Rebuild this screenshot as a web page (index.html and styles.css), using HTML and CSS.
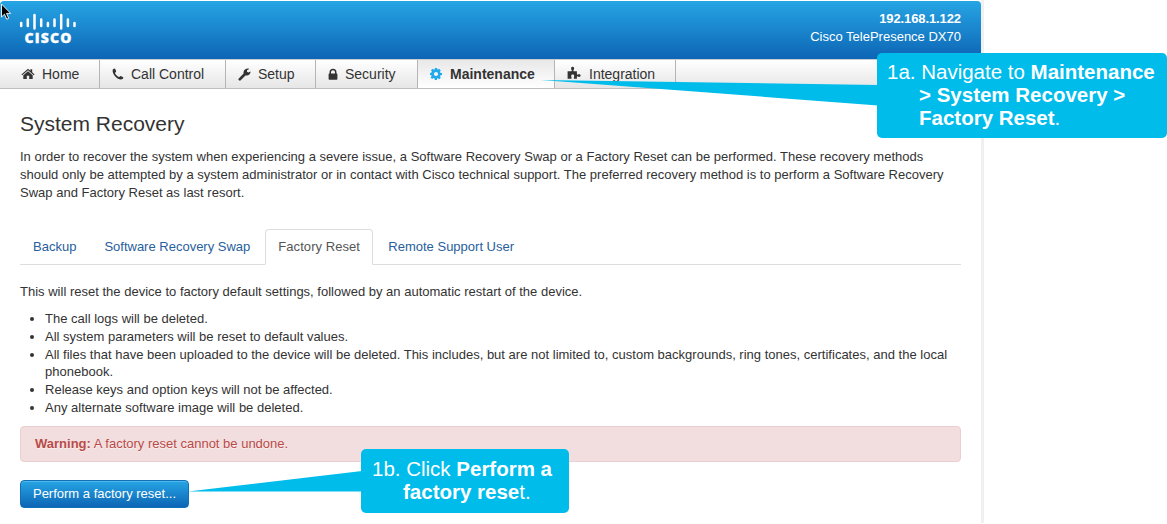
FILE: index.html
```html
<!DOCTYPE html>
<html lang="en">
<head>
<meta charset="utf-8">
<title>System Recovery</title>
<link rel="stylesheet" href="styles.css">
</head>
<body>
<div class="panel">
  <header class="header">
    <svg class="logo" width="60" height="34" viewBox="0 0 60 34" role="img" aria-label="Cisco">
      <g stroke="#fff" stroke-width="2.5" stroke-linecap="round">
        <path d="M2.200 11v3M8.800 7.500v6.500M15.500 3v13.500M22.200 7.500v6.500M28.900 11v3M35.500 7.500v6.500M42.200 3v13.500M48.900 7.500v6.500M55.500 11v3"/>
      </g>
      <text class="logo-text" x="5.500" y="31.300" textLength="47" lengthAdjust="spacing">CISCO</text>
    </svg>
    <div class="device"><b>192.168.1.122</b><span>Cisco TelePresence DX70</span></div>
  </header>
  <nav class="nav">
    <a class="nav-item home"><svg width="14" height="12" viewBox="0 0 14 12"><path d="M7 .7 9.400 2.800V1.200h1.800v3.100l2.400 2.100-.8.9L7 2.300 1.200 7.300l-.8-.9z"/><path d="M7 3.300 11.700 7.300V11H8.200V7.800H5.800V11H2.300V7.300z"/></svg>Home</a>
    <a class="nav-item call"><svg width="12" height="12" viewBox="0 0 12 12"><path d="M.6 2.200C.7 1.300 1.800.7 2.700.6c.5 0 1.300 2.200 1.400 2.800.1.6-1.100 1.100-1.100 1.700 0 .9 3 3.900 3.900 3.900.6 0 1.100-1.200 1.700-1.100.6.100 2.800 1.100 2.800 1.600-.1 1.200-1.200 2-2.500 2C5.300 11.500.3 6.300.6 2.200z"/></svg>Call Control</a>
    <a class="nav-item setup"><svg width="13" height="13" viewBox="0 0 13 13"><path d="M.8 10.400 5.600 5.600C5.100 3 7 .6 9.600.5c.6 0 1.200.1 1.600.4L9 2.200v1.600l1.400.8 2.200-1.200C12.700 5.900 10.100 8 7.500 7.500L2.700 12.300c-.5.5-1.200.4-1.700 0-.7-.6-.7-1.400-.2-1.900z"/></svg>Setup</a>
    <a class="nav-item security"><svg width="10" height="13" viewBox="0 0 10 13"><path fill-rule="evenodd" d="M1.500 5.500V4.300a3.500 3.500 0 0 1 7 0v1.200h.2c.4 0 .7.3.7.7v4.800c0 .4-.3.700-.7.700H1.300c-.4 0-.7-.3-.7-.7V6.200c0-.4.3-.7.700-.7zM3 5.500h4V4.300a2 2 0 0 0-4 0z"/></svg>Security</a>
    <a class="nav-item maintenance active"><svg width="12" height="12" viewBox="0 0 12 12"><path fill-rule="evenodd" d="M4.900 0h2.200l.4 1.700 1.500-.9 1.800 1.700-1 1.500.5.700 1.700.300v2l-1.700.400-.3.900.8 1.400-1.600 1.500-1.500-.9-.7.300L6.900 12H4.800l-.3-1.500-1-.4-1.400.9L.6 9.400l1-1.500-.3-.7L0 6.900v-2l1.500-.3.400-.9-.9-1.500L2.500.8l1.400.9.700-.300zM6 3.900a2.100 2.100 0 1 0 0 4.200 2.100 2.100 0 0 0 0-4.200z"/></svg>Maintenance</a>
    <a class="nav-item integration"><svg width="14" height="14" viewBox="0 0 14 14"><path d="M.6 5.300h3.700c.7 0 .7-.6.3-1.200C3.700 2.700 3.900.8 5.600.8s1.900 1.900 1 3.300c-.4.600-.4 1.200.3 1.200h3v2.800c0 .7.500.8 1 .5 1.200-.8 2.700-.3 2.700 1s-1.500 1.700-2.700.9c-.5-.3-1-.2-1 .5v1.800H6.900v-1.400c0-.6.3-.9.300-1.500 0-.8-.6-1.300-1.500-1.300s-1.500.5-1.500 1.300c0 .6.300.9.300 1.500v1.400H.6z"/></svg>Integration</a>
  </nav>
  <main class="content">
    <h1 class="title">System Recovery</h1>
    <p class="intro">In order to recover the system when experiencing a severe issue, a Software Recovery Swap or a Factory Reset can be performed. These recovery methods<br>should only be attempted by a system administrator or in contact with Cisco technical support. The preferred recovery method is to perform a Software Recovery<br>Swap and Factory Reset as last resort.</p>
    <div class="tabs">
      <a class="tab">Backup</a><a class="tab">Software Recovery Swap</a><a class="tab selected">Factory Reset</a><a class="tab">Remote Support User</a>
    </div>
    <p class="lead">This will reset the device to factory default settings, followed by an automatic restart of the device.</p>
    <ul class="effects">
      <li>The call logs will be deleted.</li>
      <li>All system parameters will be reset to default values.</li>
      <li>All files that have been uploaded to the device will be deleted. This includes, but are not limited to, custom backgrounds, ring tones, certificates, and the local<br>phonebook.</li>
      <li>Release keys and option keys will not be affected.</li>
      <li>Any alternate software image will be deleted.</li>
    </ul>
    <div class="alert"><b>Warning:</b> A factory reset cannot be undone.</div>
    <button class="button">Perform a factory reset...</button>
  </main>
</div>

<svg class="pointers" width="1167" height="524" viewBox="0 0 1167 524" aria-hidden="true">
  <path fill="#00bceb" d="M541 80 878 85V105.500zM188 491.500 362 471V491.500z"/>
  <path d="M1.500 4v13l3-2.800 2.200 5 2-.9-2.200-4.900h4.200z" fill="#000" stroke="#fff" stroke-width=".9"/>
</svg>
<div class="callout callout-a"><span>1a. Navigate to <b>Maintenance</b></span><b class="indent">&gt; System Recovery &gt;</b><span class="indent"><b>Factory Reset</b>.</span></div>
<div class="callout callout-b"><span>1b. Click <b>Perform a</b></span><span class="indent"><b>factory rese</b>t.</span></div>
</body>
</html>
```

FILE: styles.css
```css
* { box-sizing: border-box; }
body {
  margin: 0;
  height: 524px;
  overflow: hidden;
  background: #fff;
  font: 13px/18px "Liberation Sans", Arial, sans-serif;
  color: #333;
}
.panel {
  width: 984px;
  height: 523px;
  padding-top: 1px;
  border-right: 3px solid #f0f0f0;
}
.header {
  display: flex;
  justify-content: space-between;
  height: 58px;
  padding: 9px 20px 0 19px;
  border-radius: 4px 4px 0 0;
  background: linear-gradient(#26a5e4, #0d65b5);
  color: #fff;
}
.logo { margin-top: 2px; }
.logo-text {
  font: 800 14px "Open Sans", sans-serif;
  fill: #fff;
  stroke: #fff;
  stroke-width: .3px;
}
.device { display: flex; flex-direction: column; text-align: right; font-size: 13px; }
.device b { font-size: 13px; letter-spacing: -.1px; }
.nav {
  display: flex;
  height: 30px;
  border-top: 1px solid #c8cdd2;
  border-bottom: 1px solid #bfbfbf;
  background: linear-gradient(#fff, #e6e6e6);
  font-size: 14px;
}
.nav-item {
  display: flex;
  align-items: center;
  border-right: 1px solid #b5b5b5;
  white-space: nowrap;
}
.nav-item svg { fill: #333; flex: none; }
.home { width: 100px; padding-left: 21px; gap: 7px; }
.call { width: 126px; padding-left: 12px; gap: 7px; }
.setup { width: 90px; padding-left: 12px; gap: 7px; }
.security { width: 102px; padding-left: 12px; gap: 7px; }
.maintenance { width: 137px; padding-left: 12px; gap: 8px; }
.integration { width: 121px; padding-left: 12px; gap: 8px; }
.integration svg { margin-top: -3px; }
.active { background: linear-gradient(#e8e8e8, #fff); font-weight: bold; }
.active svg { fill: #22a8ec; }
.content { padding: 24px 20px 0; white-space: nowrap; }
.title { margin: 0; font-size: 21px; font-weight: normal; line-height: 22px; }
.intro { margin: 13px 0 0; letter-spacing: .007px; }
.tabs {
  display: flex;
  gap: 2px;
  height: 36px;
  margin-top: 27px;
  border-bottom: 1px solid #ddd;
}
.tab {
  height: 36px;
  padding: 8px 12px;
  border: 1px solid transparent;
  color: #28609c;
}
.selected {
  width: 108px;
  letter-spacing: .06px;
  border-color: #ddd;
  border-bottom-color: #fff;
  border-radius: 4px 4px 0 0;
  background: #fff;
  color: #555;
}
.lead { margin: 18px 0 0; letter-spacing: .007px; }
.effects { margin: 9px 0 0; padding-left: 25px; line-height: 17.8px; letter-spacing: .007px; }
.alert {
  height: 36px;
  margin-top: 9px;
  padding: 8px 14px;
  border: 1px solid #ebced2;
  border-radius: 4px;
  background: #f2dede;
  color: #b94a48;
  text-shadow: 0 1px 0 rgba(255,255,255,.5);
}
.button {
  display: block;
  width: 169px;
  height: 28px;
  margin-top: 18px;
  padding: 0;
  border: 1px solid #1270b8;
  border-radius: 4px;
  background: linear-gradient(#26a5e4, #0d65b5);
  box-shadow: inset 0 1px 0 rgba(255,255,255,.2);
  color: #fff;
  font: 13px/18px "Liberation Sans", Arial, sans-serif;
}
.pointers { position: absolute; left: 0; top: 0; }
.callout {
  position: absolute;
  display: flex;
  flex-direction: column;
  border-radius: 5px;
  background: #00bceb;
  color: #fff;
  font-size: 20.500px;
  line-height: 23px;
  white-space: nowrap;
}
.callout-a { left: 877px; top: 53px; width: 290px; height: 85px; padding: 7px 0 0 10px; }
.callout-b { left: 361px; top: 449px; width: 208px; height: 64px; padding: 8px 0 0 11px; }
.callout-a .indent { padding-left: 32px; }
.callout-b .indent { padding-left: 31px; }
```
